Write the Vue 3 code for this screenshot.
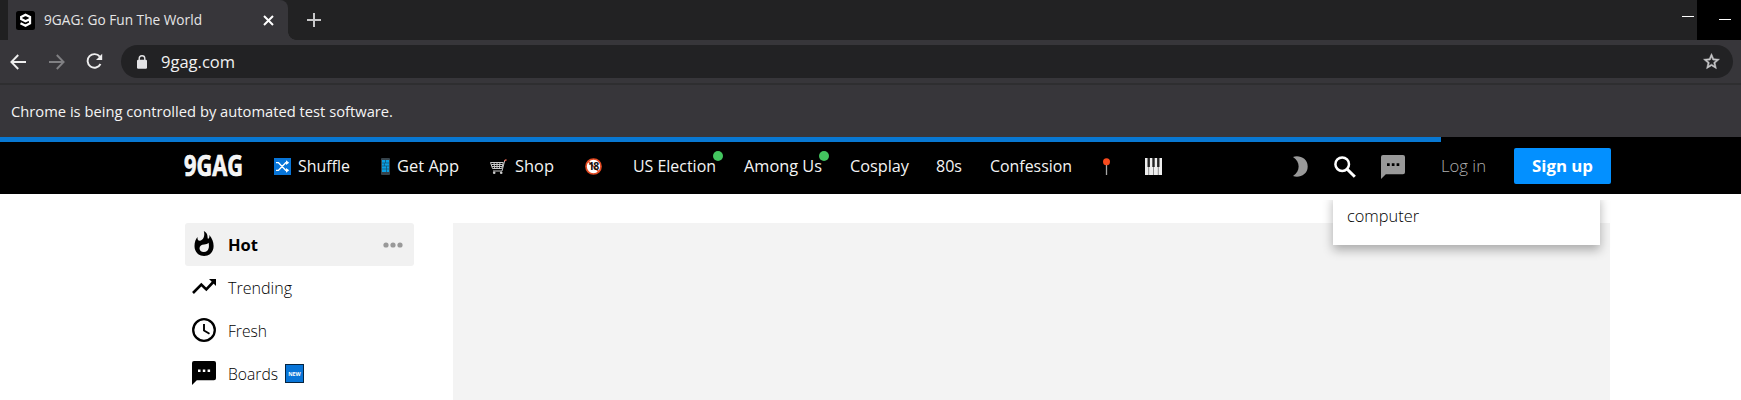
<script setup>
import { h } from 'vue'

// Single-line label fitted to a fixed advance width.
const Label = ({ text, w }) =>
  h('svg', { width: w, height: 26, class: 'label' }, [
    h('text', { x: 0, y: 19, textLength: w, lengthAdjust: 'spacingAndGlyphs', fill: 'currentColor' }, text),
  ])
Label.props = ['text', 'w']

const topics = [
  { text: 'US Election', w: 83, dot: true, cls: 'election' },
  { text: 'Among Us', w: 78, dot: true, cls: 'among' },
  { text: 'Cosplay', w: 59, cls: 'cosplay' },
  { text: '80s', w: 26, cls: 'eighties' },
  { text: 'Confession', w: 82, cls: 'confession' },
]
</script>

<template>
  <div class="window">
    <div class="tabs">
      <div class="edge"></div>
      <div class="tab">
        <svg class="favicon" width="19" height="19" viewBox="0 0 19 19">
          <rect width="19" height="19" rx="2.5" fill="#000" />
          <path d="M13.6 8.2 9.5 10.3 5.2 8V6L9.5 3.7 14 6v6.3l-4.500 2.400-5-2.500" fill="none" stroke="#fff" stroke-width="2.300" />
        </svg>
        <Label class="tab-title" text="9GAG: Go Fun The World" :w="158" />
        <svg class="close" width="11" height="11" viewBox="0 0 11 11"><path d="M1 1l9 9M10 1l-9 9" stroke="#fff" stroke-width="2" /></svg>
      </div>
      <svg class="plus" width="14" height="14" viewBox="0 0 14 14"><path d="M7 0v14M0 7h14" stroke="#c8c8c9" stroke-width="2" /></svg>
      <div class="minimize"></div>
      <div class="black-box"><div class="minimize second"></div></div>
    </div>

    <div class="toolbar">
      <svg class="back" width="16" height="16" viewBox="0 0 16 16"><path d="M16 8H1.5M8.2 1 1.4 8l6.8 7" fill="none" stroke="#eee" stroke-width="1.9" /></svg>
      <svg class="forward" width="16" height="16" viewBox="0 0 16 16"><path d="M0 8h14.5M7.8 1l6.8 7-6.8 7" fill="none" stroke="#808083" stroke-width="1.9" /></svg>
      <svg class="reload" width="17" height="17" viewBox="0 0 17 17">
        <path d="M13.8 3.7A6.8 6.8 0 1 0 14.5 11" fill="none" stroke="#eee" stroke-width="1.9" />
        <path d="M16.2 .8v6.2H10z" fill="#eee" />
      </svg>
      <div class="omnibox">
        <svg class="lock" width="10" height="14" viewBox="0 0 10 14"><path d="M2.2 6V3.5a2.8 2.8 0 0 1 5.6 0V6" fill="none" stroke="#e4e4e6" stroke-width="1.4" /><rect y="4.7" width="10" height="9" rx="1.2" fill="#e4e4e6" /></svg>
        <Label class="url" text="9gag.com" :w="74" />
        <svg class="star" width="19" height="19" viewBox="0 0 24 24"><path d="M22 9.24l-7.19-.62L12 2 9.19 8.63 2 9.24l5.46 4.73L5.82 21 12 17.27 18.18 21l-1.63-7.03L22 9.24zM12 15.4l-3.76 2.27 1-4.28-3.32-2.88 4.38-.38L12 6.1l1.71 4.04 4.38.38-3.32 2.88 1 4.28L12 15.4z" fill="#c7c7c9" stroke="#c7c7c9" stroke-width=".7" /></svg>
      </div>
    </div>

    <div class="infobar"><Label text="Chrome is being controlled by automated test software." :w="382" /></div>
    <div class="progress"><div class="bar"></div></div>

    <header class="header">
      <Label class="logo" text="9GAG" :w="59" />
      <svg class="shuffle-icon" width="17" height="17" viewBox="0 0 17 17">
        <rect width="17" height="17" fill="#0875d8" />
        <path d="M2 4.7h2.5l7.2 7.6h2M2 12.3h2.5l7.2-7.6h2" fill="none" stroke="#fff" stroke-width="1.3" />
        <path d="M12 2.3l3.2 2.4L12 7zM12 10l3.2 2.3L12 14.7z" fill="#fff" />
      </svg>
      <Label class="shuffle" text="Shuffle" :w="52" />
      <svg class="phone-icon" width="9" height="17" viewBox="0 0 9 17">
        <rect width="9" height="17" rx="1" fill="#36434b" />
        <path d="M1 2h7v12H1z" fill="#0aa0e4" />
        <path d="M1 5h7M1 8h7M1 11h7M3.4 5v3M5.5 8v6M4.5 2v3" stroke="#164c6c" stroke-width=".7" />
      </svg>
      <Label class="getapp" text="Get App" :w="62" />
      <svg class="cart-icon" width="17" height="16" viewBox="0 0 17 16">
        <path d="M.5 3.5h12.8l-1.5 6H2.5zM1.2 5.5h11.6M2 7.5h10.5M4 3.5l.7 6M7 3.5v6M10 3.5l-.7 6M14.8 1.2 12 12H3" fill="none" stroke="#c9c9c9" stroke-width="1" />
        <path d="M14.4 1.8 16.5.7" stroke="#df6553" stroke-width="1.5" /><circle cx="4.2" cy="13.8" r="1.3" fill="#ccc" /><circle cx="11.2" cy="13.8" r="1.3" fill="#ccc" />
      </svg>
      <Label class="shop" text="Shop" :w="39" />
      <svg class="adult-icon" width="17" height="17" viewBox="0 0 17 17">
        <circle cx="8.5" cy="8.5" r="7.5" fill="#fff" stroke="#e44a22" stroke-width="1.7" />
        <path d="M3.4 3.4l10.2 10.2" stroke="#e44a22" stroke-width="1.4" />
        <text x="8.7" y="12.4" text-anchor="middle" font-size="10.5" font-weight="700" fill="#111" textLength="11">18</text>
      </svg>
      <div v-for="t in topics" :key="t.text" class="topic" :class="t.cls">
        <Label :text="t.text" :w="t.w" /><span v-if="t.dot" class="dot"></span>
      </div>
      <svg class="pin-icon" width="7" height="17" viewBox="0 0 7 17"><path d="M3.5 6v11" stroke="#a7a7a7" stroke-width="1.3" /><circle cx="3.5" cy="3.8" r="3.5" fill="#f94a1d" /></svg>
      <svg class="piano-icon" width="17" height="17" viewBox="0 0 17 17">
        <path d="M0 0h17v17H0z" fill="#eee" /><path d="M2.5 0h2.4v9H2.5zM7.3 0h2.4v9H7.3zM12.1 0h2.4v9h-2.4z" fill="#222" />
        <path d="M3.7 9v8M8.5 9v8M13.3 9v8" stroke="#777" stroke-width=".8" />
      </svg>
      <svg class="moon-icon" width="16" height="21" viewBox="0 0 16 21"><path d="M1 1C7-1.2 15.7 2 15.7 10.5S7 22.2 1 20C8.5 15.5 8.5 5.5 1 1z" fill="#999" /></svg>
      <svg class="search-icon" width="22" height="22" viewBox="0 0 22 22"><circle cx="8.2" cy="8.2" r="6.8" fill="none" stroke="#fff" stroke-width="2.5" /><path d="M13 13l7.8 7.8" stroke="#fff" stroke-width="3" /></svg>
      <svg class="chat-icon" width="24" height="24" viewBox="0 0 24 24"><path d="M2 0h20a2 2 0 0 1 2 2v15.2a2 2 0 0 1-2 2H4.8L0 24V2a2 2 0 0 1 2-2z" fill="#999" /><path d="M6 8.3h2.7V11H6zM10.8 8.3h2.7V11h-2.7zM15.6 8.3h2.7V11h-2.7z" fill="#000" /></svg>
      <Label class="login" text="Log in" :w="45" />
      <button class="signup"><Label text="Sign up" :w="61" /></button>
    </header>

    <main class="page">
      <nav class="side">
        <div class="row active">
          <svg width="24" height="26" viewBox="0 0 24 26"><path d="M11.8 0c4.7 3 3.2 5.1 4.2 8.1 1.3-.8 1.7-2.4 1.3-4.1 2.8 3 4.3 7.2 4.3 11 0 6-4 10-9.5 10S2.5 21 2.5 15c0-4 1.2-7.1 3-9-.2 2 .4 3.8 2.2 3.8C11 9.5 13.4 5 11.8 0z" /><path d="M7.5 17.3c0-2.6 2.2-3.6 4.6-3.9 2.1-.2 3.5-.6 4.5-1.7.8 3.5.7 9-4.7 9.3-2.5.1-4.4-1.4-4.4-3.7z" fill="#f1f1f1" /></svg>
          <Label text="Hot" :w="30" />
          <svg class="more" width="20" height="6" viewBox="0 0 20 6"><circle cx="3" cy="3" r="2.6" /><circle cx="10" cy="3" r="2.6" /><circle cx="17" cy="3" r="2.6" /></svg>
        </div>
        <div class="row">
          <svg width="24" height="26" viewBox="0 0 24 26"><path d="M1 19l8.3-8.5 5 5 7-7.5" fill="none" stroke="#000" stroke-width="2.6" /><path d="M17 5h7v7z" /></svg>
          <Label text="Trending" :w="64" />
        </div>
        <div class="row">
          <svg width="24" height="26" viewBox="0 0 24 26"><circle cx="12" cy="13" r="10.8" fill="none" stroke="#000" stroke-width="2.3" /><path d="M12 7v6.5l5.5 3.3" fill="none" stroke="#000" stroke-width="1.9" /></svg>
          <Label text="Fresh" :w="39" />
        </div>
        <div class="row">
          <svg width="24" height="26" viewBox="0 0 24 26"><path d="M2 1h20a2 2 0 0 1 2 2v15.2a2 2 0 0 1-2 2H4.8L0 25V3a2 2 0 0 1 2-2z" /><path d="M6 9.5h2.5V12H6zM10.8 9.5h2.5V12h-2.5zM15.6 9.5h2.5V12h-2.5z" fill="#fff" /></svg>
          <Label text="Boards" :w="50" />
          <svg class="new" width="19" height="19" viewBox="0 0 19 19"><rect x=".5" y=".5" width="18" height="18" fill="#0875d8" stroke="#06243f" /><text x="3.2" y="11.8" font-size="5.5" font-weight="700" fill="#fff" textLength="12.6" lengthAdjust="spacingAndGlyphs">NEW</text></svg>
        </div>
      </nav>
      <section class="content"></section>
      <div class="suggest"><Label text="computer" :w="72" /></div>
    </main>
  </div>
</template>

<style>
body { margin: 0; overflow: hidden; }
</style>

<style scoped>
.window { width: 1741px; height: 400px; overflow: hidden; background: #fff; font-family: "Open Sans", "Noto Sans", sans-serif; font-size: 16px; display: flex; flex-direction: column; }
svg { display: block; flex: none; }
.label { overflow: visible; }
.tabs { height: 40px; flex: none; background: #222223; display: flex; }
.edge { width: 8px; background: #202021; }
.tab { position: relative; box-sizing: border-box; width: 280px; background: #37363a; border-radius: 0 8px 0 0; display: flex; align-items: center; padding-left: 8px; color: #e5e5e6; font-size: 14px; }
.tab::after { content: ""; position: absolute; left: 280px; bottom: 0; width: 8px; height: 8px; background: radial-gradient(circle at 8px 0, transparent 7.5px, #37363a 8px); }
.tab-title { margin: -2px 0 0 9px; }
.close { margin-left: 61px; }
.plus { margin: 13px 0 0 19px; }
.minimize { width: 12px; height: 1px; background: #fff; margin: 16px 3px 0 auto; }
.black-box { width: 44px; background: #000; }
.second { margin: 19px 0 0 22px; }
.toolbar { height: 45px; box-sizing: border-box; flex: none; background: #37363a; border-bottom: 2px solid #2e2e30; padding: 5px 8px 5px 10px; display: flex; align-items: center; }
.forward { margin-left: 23px; }
.reload { margin-left: 21px; }
.omnibox { margin-left: 18px; width: 1612px; height: 33px; flex: none; background: #222224; border-radius: 17px; display: flex; align-items: center; color: #f1f1f2; }
.lock { margin-left: 16px; }
.url { margin-left: 14px; }
.star { margin: 0 12px 0 auto; }
.infobar { height: 52px; box-sizing: border-box; flex: none; background: #37363a; padding: 13px 0 0 11px; color: #f4f4f4; font-size: 15px; }
.progress { height: 5px; flex: none; background: #000; }
.bar { height: 5px; width: 1441px; background: #0878d2; }
.header { height: 52px; flex: none; background: #000; display: flex; align-items: center; color: #f4f4f4; }
.header > svg { margin-top: -3px; }
.header > .label, .topic { margin-top: -5px; }
.header > .logo { margin: -3px 0 0 184px; font-size: 29px; font-weight: 700; stroke: #fff; stroke-width: .7px; position: relative; top: 3px; }
.shuffle-icon { margin-left: 31px; }
.shuffle { margin-left: 7px; }
.phone-icon { margin-left: 31px; }
.getapp { margin-left: 7px; }
.cart-icon { margin-left: 31px; }
.shop { margin-left: 8px; }
.adult-icon { margin-left: 31px; }
.topic { position: relative; }
.dot { position: absolute; width: 10px; height: 10px; border-radius: 50%; background: #43c55f; right: -7px; top: -2px; }
.election { margin-left: 31px; }
.among { margin-left: 28px; }
.cosplay { margin-left: 28px; }
.eighties { margin-left: 27px; }
.confession { margin-left: 28px; }
.pin-icon { margin-left: 31px; }
.piano-icon { margin-left: 35px; }
.moon-icon { margin-left: 130px; }
.search-icon { margin-left: 26px; }
.chat-icon { margin-left: 25px; }
.login { margin-left: 36px; color: #b0b0b0; font-weight: 300; }
.signup { margin: -5px 0 0 28px; width: 97px; height: 36px; flex: none; border: 0; border-radius: 2px; background: #0390ff; color: #fff; padding: 0 0 0 18px; font: 700 16px "Open Sans", "Noto Sans", sans-serif; }
.page { flex: 1; position: relative; display: flex; padding: 29px 131px 0 185px; color: #000; font-weight: 300; }
.side { width: 229px; flex: none; }
.row { height: 43px; display: flex; align-items: center; padding-left: 7px; }
.row > svg { margin-top: -1px; }
.row .label { margin: 0 0 0 12px; }
.row.active { background: #f1f1f1; border-radius: 3px; font-weight: 700; }
.row .more { margin: 0 11px 0 auto; fill: #999; }
.row .new { margin-left: 7px; }
.content { margin-left: 39px; width: 1157px; flex: none; background: #f3f3f3; }
.suggest { position: absolute; left: 1333px; top: 0; width: 267px; height: 51px; box-sizing: border-box; padding: 9px 0 0 14px; background: #fff; color: #000; box-shadow: 0 5px 10px rgba(0, 0, 0, .3); clip-path: inset(6px -12px -20px -12px); }
</style>
